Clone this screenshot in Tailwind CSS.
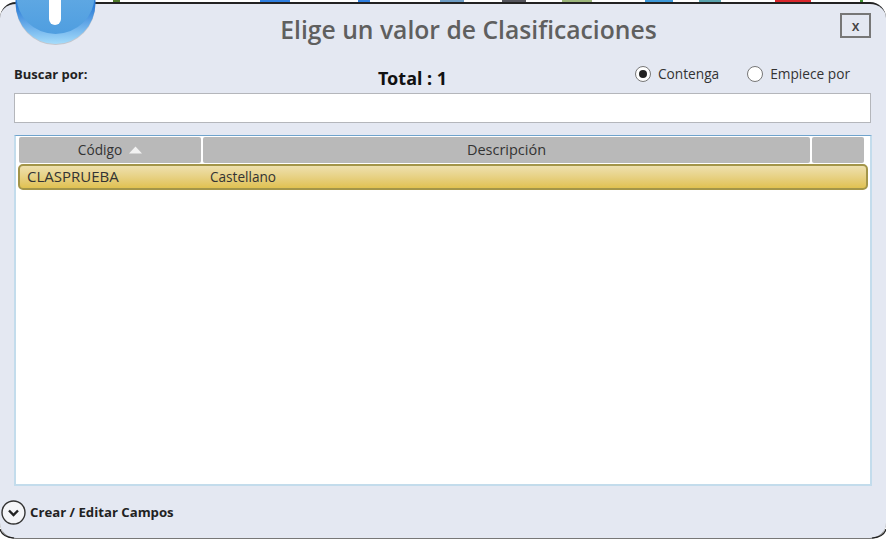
<!DOCTYPE html>
<html lang="es">
<head>
  <meta charset="UTF-8" />
  <title>Elige un valor de Clasificaciones</title>
  <script src="https://cdn.jsdelivr.net/npm/@tailwindcss/browser@4"></script>
</head>
<body class="w-[886px] h-[539px] overflow-hidden bg-white relative font-['Open_Sans','Noto_Sans',sans-serif]">
  <!-- trozos del escritorio que asoman por arriba -->
  <div class="absolute top-0 left-0 w-full h-[3px] flex">
    <div class="absolute left-[113px] w-[7px] h-[3px] bg-[#4f7a2a]"></div>
    <div class="absolute left-[260px] w-[30px] h-[3px] bg-[#2f7fe0]"></div>
    <div class="absolute left-[358px] w-[12px] h-[3px] bg-[#2f7fe0]"></div>
    <div class="absolute left-[440px] w-[24px] h-[3px] bg-[#6d9cc4]"></div>
    <div class="absolute left-[502px] w-[24px] h-[3px] bg-[#55555c]"></div>
    <div class="absolute left-[562px] w-[30px] h-[3px] bg-[#9db67a]"></div>
    <div class="absolute left-[645px] w-[28px] h-[3px] bg-[#3d98d8]"></div>
    <div class="absolute left-[699px] w-[22px] h-[3px] bg-[#5aa3ad]"></div>
    <div class="absolute left-[775px] w-[36px] h-[3px] bg-[#d9262c]"></div>
    <div class="absolute left-[860px] w-[3px] h-[3px] bg-[#3f8f2f]"></div>
  </div>

  <div class="absolute inset-x-0 top-[2px] bottom-0 bg-[#e4e8f2] rounded-[16px] border-t-2 border-t-[#222] border-b border-b-[#777] flex flex-col">
    <header class="h-[53px] relative flex justify-center">
      <h1 class="mt-[8px] ml-[51px] text-[24.7px] leading-[36px] font-semibold text-[#5f5f5f]">Elige un valor de Clasificaciones</h1>
      <button class="absolute top-[9px] right-[15px] w-[31px] h-[25px] border-2 border-[#777] text-[14px] leading-[19px] font-semibold text-[#444]">x</button>
    </header>

    <div class="h-[34px] pl-[14px] pr-[36px] grid grid-cols-[1fr_auto_1fr] items-center">
      <span class="text-[13px] font-bold text-[#222]">Buscar por:</span>
      <span class="mt-[8px] ml-[-39px] text-[18px] font-bold text-[#111] [font-family:'Noto_Sans',sans-serif]">Total : 1</span>
      <div class="flex justify-end items-center text-[13.7px] text-[#333]">
        <span class="w-[16px] h-[16px] rounded-full border border-[#777] bg-white flex items-center justify-center"><span class="w-[8px] h-[8px] rounded-full bg-[#222]"></span></span>
        <span class="ml-[7px]">Contenga</span>
        <span class="ml-[28px] w-[16px] h-[16px] rounded-full border border-[#777] bg-white"></span>
        <span class="ml-[7px]">Empiece por</span>
      </div>
    </div>

    <input class="mt-[2px] ml-[14px] mr-[15px] h-[30px] bg-white border border-[#b4b6bb]" />

    <section class="mt-[12px] ml-[14px] mr-[14px] h-[351px] bg-white border-2 border-[#c3dcec] border-t border-t-[#6fa3cc] pt-[1px] pl-[3px]">
      <div class="flex gap-[2px] h-[26px] pr-[6px] text-[#333]">
        <div class="w-[182px] bg-[#b9b9b9] rounded-[2px] flex items-center justify-center gap-[7px] text-[13.7px]">
          <span>Código</span>
          <svg width="13" height="8" viewBox="0 0 13 8"><path d="M6.5 0.5 L13 7.5 H0 Z" fill="#f2f2f2"/></svg>
        </div>
        <div class="flex-1 bg-[#b9b9b9] rounded-[2px] flex items-center justify-center text-[14.5px]">Descripción</div>
        <div class="w-[52px] bg-[#b9b9b9] rounded-[2px]"></div>
      </div>
      <div class="mt-[1px] ml-[-1px] mr-[2px] h-[26px] rounded-[5px] border-2 border-[#a39549] bg-gradient-to-b from-[#eee0ae] to-[#e0c150] flex items-center text-[#333]">
        <span class="w-[190px] pl-[7px] pb-[2px] text-[15px]">CLASPRUEBA</span>
        <span class="text-[13.6px]">Castellano</span>
      </div>
    </section>

    <footer class="mt-[14px] pl-[1px] flex items-center gap-[4px]">
      <svg width="25" height="25" viewBox="0 0 25 25"><circle cx="12.5" cy="12.5" r="11.5" fill="#f4f5f8" stroke="#333" stroke-width="1.4"/><path d="M8 10.5 L12.5 15 L17 10.5" fill="none" stroke="#222" stroke-width="2.4"/></svg>
      <span class="text-[13.2px] font-bold text-[#222]">Crear / Editar Campos</span>
    </footer>
  </div>

  <!-- esquinas inferiores oscuras -->
  <svg class="absolute left-0 bottom-0" width="16" height="10" viewBox="0 0 16 10"><path d="M0 0 Q2 8 14 9" fill="none" stroke="#222" stroke-width="1.2"/></svg>
  <svg class="absolute right-0 bottom-0" width="16" height="10" viewBox="0 0 16 10"><path d="M16 0 Q14 8 2 9" fill="none" stroke="#222" stroke-width="1.2"/></svg>

  <!-- orbe del icono de información -->
  <svg class="absolute left-[14px] top-0" width="83" height="48" viewBox="0 0 83 48">
    <defs>
      <linearGradient id="borde" x1="0" y1="0" x2="0" y2="1"><stop offset="0" stop-color="#0f55b8"/><stop offset="0.55" stop-color="#2f7fd8"/><stop offset="1" stop-color="#a5dcfb"/></linearGradient>
      <linearGradient id="disco" x1="0" y1="0" x2="0" y2="1"><stop offset="0" stop-color="#6fb2e6"/><stop offset="1" stop-color="#4f9ee0"/></linearGradient>
    </defs>
    <ellipse cx="41.5" cy="4" rx="40" ry="41" fill="#888" opacity="0.35"/>
    <ellipse cx="41.5" cy="3" rx="40" ry="41" fill="url(#borde)"/>
    <ellipse cx="41.5" cy="-4" rx="39" ry="38" fill="url(#disco)"/>
    <rect x="35" y="-10" width="12" height="35" rx="6" fill="#fff"/>
  </svg>
</body>
</html>
